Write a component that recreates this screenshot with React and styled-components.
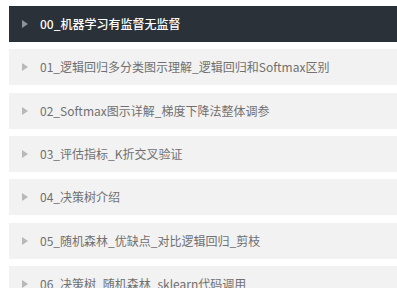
import React from 'react';
import styled, { createGlobalStyle } from 'styled-components';

const GlobalStyle = createGlobalStyle`
  body {
    margin: 0;
    background: #fff;
    font-family: "Noto Sans CJK SC", "Noto Sans", sans-serif;
  }
`;

const lessons = [
  '00_机器学习有监督无监督',
  '01_逻辑回归多分类图示理解_逻辑回归和Softmax区别',
  '02_Softmax图示详解_梯度下降法整体调参',
  '03_评估指标_K折交叉验证',
  '04_决策树介绍',
  '05_随机森林_优缺点_对比逻辑回归_剪枝',
  '06_决策树_随机森林_sklearn代码调用',
];

function LessonList() {
  return (
    <List>
      {lessons.map((title, i) => (
        <Item key={title} active={i === 0}>
          <Arrow active={i === 0} />
          <Title active={i === 0}>{title}</Title>
        </Item>
      ))}
    </List>
  );
}

export default function App() {
  return (
    <>
      <GlobalStyle />
      <LessonList />
    </>
  );
}

const List = styled.div`
  padding: 6px 0 0 9px;
  width: 388px;
  overflow: hidden;
`;

const Item = styled.div`
  display: flex;
  align-items: center;
  height: 36px;
  margin-bottom: 7.33px;
  padding-left: 13px;
  background: ${(p) => (p.active ? '#2b3139' : '#f2f2f2')};
  cursor: pointer;
`;

const Arrow = styled.span`
  width: 0;
  height: 0;
  border-top: 4.5px solid transparent;
  border-bottom: 4.5px solid transparent;
  border-left: 6px solid ${(p) => (p.active ? '#8e9296' : '#b8b8b8')};
  margin-right: 12px;
`;

const Title = styled.span`
  font-size: 12px;
  line-height: 1;
  white-space: nowrap;
  color: ${(p) => (p.active ? '#ffffff' : '#707070')};
  font-weight: ${(p) => (p.active ? 500 : 400)};
`;
